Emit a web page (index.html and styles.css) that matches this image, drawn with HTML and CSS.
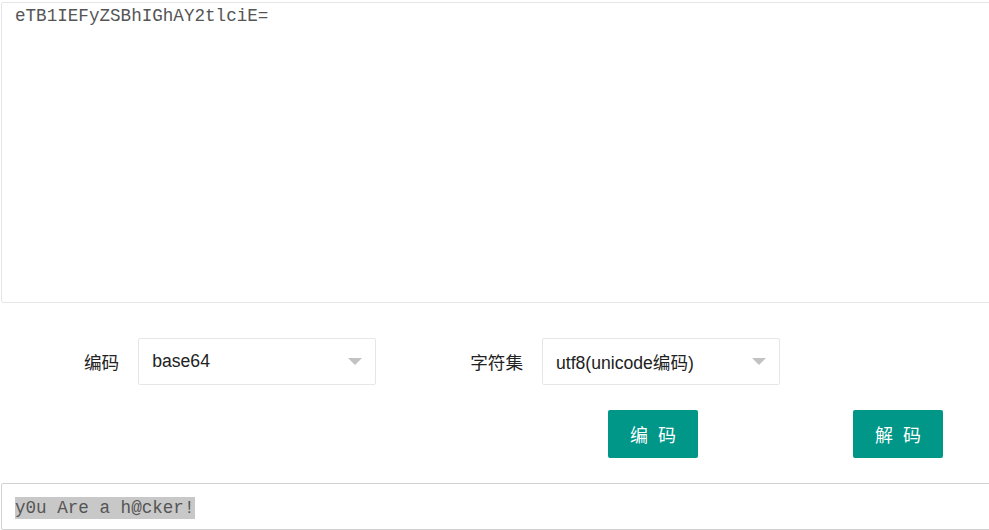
FILE: index.html
```html
<!DOCTYPE html>
<html lang="zh-CN">

<head>
	<meta charset="UTF-8">
	<title>编码转换</title>

	<link rel="stylesheet" href="styles.css">
</head>

<body>

	<main>
		<div class="src">eTB1IEFyZSBhIGhAY2tlciE=</div>

		<div class="row">
			<div class="field">
				<label>编码</label>
				<div class="select">
					<span>base64</span>
					<i class="arrow"></i>
				</div>
			</div>

			<div class="field">
				<label>字符集</label>
				<div class="select">
					<span>utf8(unicode编码)</span>
					<i class="arrow"></i>
				</div>
			</div>
		</div>

		<div class="btns">
			<div class="btn">编 码</div>
			<div class="btn">解 码</div>
		</div>

		<div class="out"><span class="sel">y0u Are a h@cker!</span></div>
	</main>

</body>

</html>
```

FILE: styles.css
```css
body {
	margin: 0;
	overflow: hidden;
	background-color: #fff;
	font-family: "Liberation Sans", "Noto Sans CJK SC", sans-serif;
	font-size: 17.6px;
	color: #222;
}

main {
	width: 989px;
	height: 530px;
	overflow: hidden;
	padding: 2px 0 0 1px;
	box-sizing: border-box;
}

.src,
.out {
	width: 1100px;
	box-sizing: border-box;
	border: 1px solid #e6e6e6;
	border-radius: 2px;
	font-family: "Liberation Mono", monospace;
	font-size: 17.6px;
	line-height: 20px;
	color: #555;
	padding: 3px 13px;
}

.src {
	height: 301px;
}

.row {
	display: flex;
	margin-top: 35px;
	padding-left: 83px;
	gap: 94px;
}

.field {
	display: flex;
	align-items: center;
	gap: 19px;
}

.field label {
	font-family: "Noto Sans CJK SC", sans-serif;
	line-height: 22px;
}

.select {
	position: relative;
	width: 238px;
	height: 47px;
	box-sizing: border-box;
	border: 1px solid #e6e6e6;
	border-radius: 2px;
	display: flex;
	align-items: center;
	padding-left: 13px;
}

.arrow {
	position: absolute;
	right: 13px;
	top: 19px;
	width: 0;
	height: 0;
	border-left: 7px solid transparent;
	border-right: 7px solid transparent;
	border-top: 7px solid #c2c2c2;
}

.btns {
	display: flex;
	margin-top: 25px;
	padding-left: 607px;
	gap: 155px;
}

.btn {
	width: 90px;
	height: 48px;
	border-radius: 2px;
	background-color: #009688;
	color: #fff;
	font-family: "Noto Sans CJK SC", sans-serif;
	font-size: 18px;
	display: flex;
	align-items: center;
	justify-content: center;
	letter-spacing: 3px;
	text-indent: 3px;
}

.out {
	margin-top: 25px;
	height: 47px;
	border-color: #d2d2d2;
	padding-top: 14px;
}

.sel {
	background-color: #c8c8c8;
	padding: 1px 0;
}
```
